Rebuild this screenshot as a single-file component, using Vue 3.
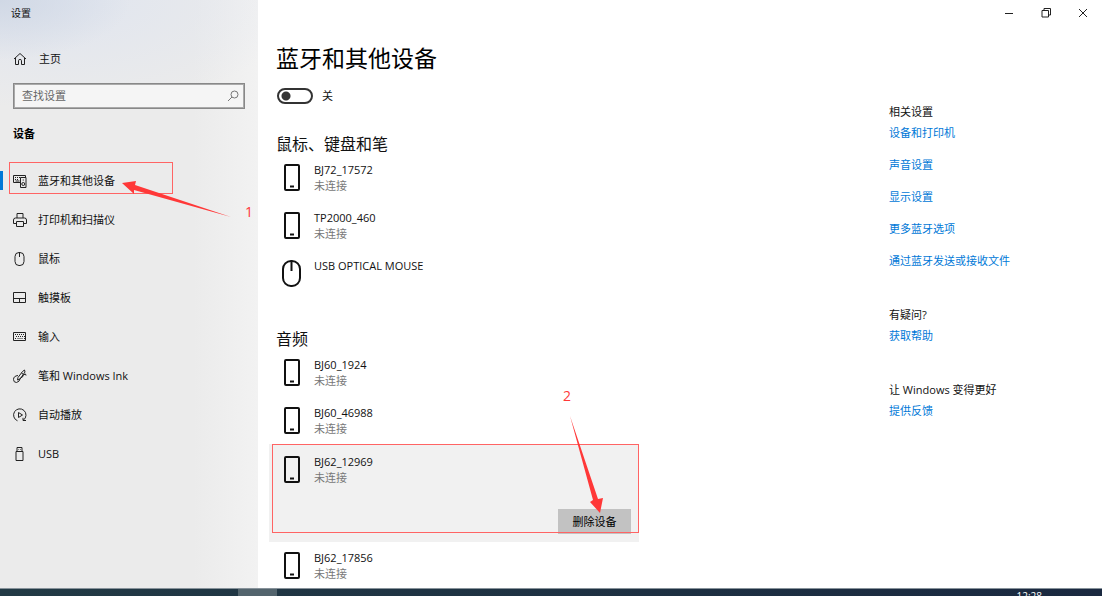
<script setup>
import { ref } from 'vue'

const query = ref('')
const bluetoothOn = ref(false)

const nav = [
  { icon: 'devices', label: '蓝牙和其他设备', active: true },
  { icon: 'printer', label: '打印机和扫描仪' },
  { icon: 'mouse', label: '鼠标' },
  { icon: 'touchpad', label: '触摸板' },
  { icon: 'keyboard', label: '输入' },
  { icon: 'pen', label: '笔和 Windows Ink' },
  { icon: 'autoplay', label: '自动播放' },
  { icon: 'usb', label: 'USB' },
]

const groups = [
  {
    title: '鼠标、键盘和笔',
    devices: [
      { name: 'BJ72_17572', status: '未连接' },
      { name: 'TP2000_460', status: '未连接' },
      { name: 'USB OPTICAL MOUSE', mouse: true },
    ],
  },
  {
    title: '音频',
    devices: [
      { name: 'BJ60_1924', status: '未连接' },
      { name: 'BJ60_46988', status: '未连接' },
      { name: 'BJ62_12969', status: '未连接', selected: true },
      { name: 'BJ62_17856', status: '未连接' },
    ],
  },
]

const related = [
  { title: '相关设置', links: ['设备和打印机', '声音设置', '显示设置', '更多蓝牙选项', '通过蓝牙发送或接收文件'] },
  { title: '有疑问?', links: ['获取帮助'] },
  { title: '让 Windows 变得更好', links: ['提供反馈'] },
]
</script>

<template>
  <div class="screen">
    <div class="window">
      <aside class="sidebar">
        <div class="app-title">设置</div>
        <a class="home" href="#">
          <svg class="icon" viewBox="0 0 14 14"><path d="M1 7 7 1.500l6 5.500M2.500 6v6.500h3V8.500q0-1 1.500-1t1.500 1v4h3V6" /></svg>
          <span>主页</span>
        </a>
        <div class="search">
          <input v-model="query" type="text" placeholder="查找设置" aria-label="查找设置" />
          <svg class="search-icon" viewBox="0 0 12 12"><circle cx="7.500" cy="4.500" r="3.500" /><path d="M5 7 1 11" /></svg>
        </div>
        <h2 class="category">设备</h2>
        <nav class="nav">
          <a v-for="item in nav" :key="item.icon" class="nav-item" :class="{ active: item.active }" href="#">
            <svg class="icon" viewBox="0 0 14 14">
              <g v-if="item.icon === 'devices'">
                <path d="M7 8.500H.5v-7h12V3M2 3.500h1m1 0h1m1 0h1m1 0h1M2 5.500h1m1 0h1M2.500 7h4M7.500 3.500h5.500v10H7.500z" />
                <circle cx="10.250" cy="10" r="1.500" /><path d="M9.700 6h1.100" />
              </g>
              <g v-else-if="item.icon === 'printer'">
                <path d="M4 5V.5h6V5M3.500 10.500h-3V7q0-2 2-2h9q2 0 2 2v3.500h-3M3.500 8.500h7v5h-7z" />
              </g>
              <g v-else-if="item.icon === 'mouse'">
                <rect x="2" y=".5" width="9" height="13" rx="4" /><path d="M6.500 .5V5" />
              </g>
              <g v-else-if="item.icon === 'touchpad'">
                <path d="M.5 1.500h12v10H.5zM.5 7.500h12M6.500 7.500v4" />
              </g>
              <g v-else-if="item.icon === 'keyboard'">
                <path d="M.5 2.500h12v8H.5z" />
                <path class="keys" d="M2 4.500h10M3 6.500h9M2 8.500h1m1.500 0h5M11 8.500h1" />
              </g>
              <g v-else-if="item.icon === 'pen'">
                <path d="m5 8.500 4.500-6 2-1.500.5 2L7 10l-2.500 1zM8.500 4l2 1.500M5 6.500Q.5 7 .5 10.500q0 3 3 3Q6.500 13 7.500 9l2-1q0-2.500 3-3l.5 1.500" />
              </g>
              <g v-else-if="item.icon === 'autoplay'">
                <path d="M4.500 12.800A6.200 6.200 0 1 1 10.500 12M5.500 4.500v5l4-2.500zM13 12.500h-3V9.800" />
              </g>
              <g v-else>
                <path d="M4 4.500v-4h5v4M3 4.500h7v9H3zM5.500 2.500h.6m1 0h.6" />
              </g>
            </svg>
            <span>{{ item.label }}</span>
          </a>
        </nav>
      </aside>

      <main class="content">
        <h1>蓝牙和其他设备</h1>
        <label class="toggle">
          <input v-model="bluetoothOn" type="checkbox" role="switch" />
          <span>{{ bluetoothOn ? '开' : '关' }}</span>
        </label>
        <section v-for="group in groups" :key="group.title" class="group">
          <h2>{{ group.title }}</h2>
          <ul>
            <li v-for="device in group.devices" :key="device.name" :class="{ selected: device.selected }">
              <div class="device">
                <svg class="device-icon" viewBox="0 0 20 28">
                  <g v-if="device.mouse"><rect x="2" y="1" width="17" height="25" rx="8" /><path d="M10.500 1v10" /></g>
                  <g v-else><rect x="4" y="1" width="14" height="25" rx="1" /><path d="M9 22.500h4" /></g>
                </svg>
                <div class="device-text">
                  <span>{{ device.name }}</span>
                  <span v-if="device.status" class="status">{{ device.status }}</span>
                </div>
              </div>
              <template v-if="device.selected">
                <button class="remove" type="button">删除设备</button>
                <div class="mark mark-device"></div>
                <svg class="arrow arrow-device" viewBox="0 0 34 98"><path d="M0 0 28 83l5-1-3 15-10-11 3-2z" /></svg>
                <span class="number number-device">2</span>
              </template>
            </li>
          </ul>
        </section>
      </main>

      <aside class="side">
        <div class="controls">
          <button type="button" aria-label="最小化"><svg viewBox="0 0 10 10"><path d="M1 5.500h8" /></svg></button>
          <button type="button" aria-label="还原"><svg viewBox="0 0 10 10"><path d="M1 2.500h6.500V9H1zM3 2.500v-2h6.500V7h-2" /></svg></button>
          <button type="button" aria-label="关闭"><svg viewBox="0 0 10 10"><path d="m1 1 8 8M9 1 1 9" /></svg></button>
        </div>
        <section v-for="block in related" :key="block.title" class="related">
          <h3>{{ block.title }}</h3>
          <a v-for="link in block.links" :key="link" href="#">{{ link }}</a>
        </section>
      </aside>

      <div class="mark mark-nav"></div>
      <svg class="arrow arrow-nav" viewBox="0 0 110 38"><path d="M0 3 14 1l-1 4 96 32L12 10v4z" /></svg>
      <span class="number number-nav">1</span>
    </div>
    <footer class="taskbar">
      <div class="task"></div>
      <time>12:28</time>
    </footer>
  </div>
</template>

<style>
body {
  margin: 0;
  background: #fff;
}
</style>

<style scoped>
* {
  box-sizing: border-box;
}
.screen {
  display: flex;
  flex-direction: column;
  height: 100vh;
  overflow: hidden;
  font: 11px/16px "Open Sans", "Noto Sans CJK SC", sans-serif;
  color: #111;
}
h1, h2, h3, ul {
  margin: 0;
  padding: 0;
  font-weight: 400;
}
a {
  text-decoration: none;
  color: inherit;
}
svg {
  fill: none;
  stroke: #222;
}
.window {
  position: relative;
  flex: 1;
  min-height: 0;
  overflow: hidden;
  display: grid;
  grid-template-columns: 258px minmax(0, 1fr) 213px;
  background: #fff;
}
.sidebar {
  padding-top: 5px;
  background:
    radial-gradient(ellipse 130px 60px at 0 0, #d0d8e5, rgba(208, 216, 229, 0)),
    radial-gradient(ellipse 240px 110px at 60px 0, #e0e5ef, rgba(230, 233, 240, 0)),
    linear-gradient(90deg, #ebebeb 75%, #f2f2f2);
}
.app-title {
  padding-left: 11px;
  font-size: 10px;
}
.home, .nav-item {
  display: flex;
  align-items: center;
  padding-left: 13px;
}
.home {
  gap: 12px;
  margin-top: 30px;
}
.icon {
  width: 14px;
  height: 14px;
}
.keys {
  stroke-dasharray: 1 1;
}
.search {
  display: flex;
  align-items: center;
  height: 26px;
  margin: 16px 13px 0 13px;
  padding: 0 5px 0 8px;
  border: 1px solid #888;
  outline: 1px solid #aaa;
  outline-offset: -2px;
  background: #f5f5f5;
}
.search input {
  flex: 1;
  min-width: 0;
  padding: 0;
  border: 0;
  outline: 0;
  background: none;
  font: inherit;
}
.search input::placeholder {
  color: #666;
  opacity: 1;
}
.search-icon {
  width: 12px;
  height: 12px;
  stroke: #777;
}
.category {
  margin: 17px 0 19px 13px;
  font-size: 11px;
  font-weight: 700;
  color: #000;
}
.nav-item {
  gap: 11px;
  height: 39px;
}
.nav-item.active {
  background: linear-gradient(#0078d7, #0078d7) 0 50% / 3px 19px no-repeat;
}
.content {
  padding: 42px 0 0 18px;
}
h1 {
  font-size: 23px;
  line-height: 32px;
  color: #000;
}
.toggle {
  display: flex;
  align-items: center;
  gap: 9px;
  margin: 14px 0 0 1px;
}
.toggle input {
  appearance: none;
  width: 36px;
  height: 16px;
  margin: 0;
  border: 2px solid #333;
  border-radius: 8px;
  background: radial-gradient(circle at 7px 50%, #333 4px, transparent 5px);
}
.group {
  max-width: 363px;
  margin-top: 29px;
}
.group h2 {
  font-size: 16px;
  line-height: 22px;
}
.group ul {
  margin-left: -7px;
  list-style: none;
}
.group li {
  position: relative;
  height: 48px;
  padding: 7px 8px 0 12px;
}
.group li.selected {
  height: 98px;
  margin: -2px 0 1px;
  padding-top: 10px;
  background: #f1f1f1;
}
.device {
  display: flex;
  gap: 13px;
}
.device-icon {
  width: 20px;
  height: 28px;
  margin-top: 2px;
  stroke: #111;
  stroke-width: 2px;
}
.device-text {
  display: flex;
  flex-direction: column;
}
.status {
  color: #777;
}
.remove {
  display: block;
  width: 73px;
  height: 25px;
  margin: 23px 0 0 auto;
  padding: 0;
  border: 0;
  background: #c2c2c2;
  font: inherit;
  color: #000;
}
.controls {
  display: flex;
  justify-content: flex-end;
  margin-bottom: 78px;
  padding-right: 1px;
}
.controls button {
  display: grid;
  place-items: center;
  width: 37px;
  height: 26px;
  padding: 0;
  border: 0;
  background: none;
}
.controls svg {
  width: 10px;
  height: 10px;
}
.related {
  display: flex;
  flex-direction: column;
  align-items: flex-start;
  gap: 16px;
  margin-bottom: 38px;
}
.related h3 {
  font-size: 11px;
  margin-bottom: -11px;
}
.related a {
  color: #0078d7;
}
.mark {
  position: absolute;
  border: 1px solid #ff6464;
  pointer-events: none;
}
.mark-nav {
  left: 9px;
  top: 162px;
  width: 164px;
  height: 32px;
}
.mark-device {
  inset: 0 0 9px 3px;
}
.arrow {
  position: absolute;
  overflow: visible;
  fill: #ff3838;
  stroke: none;
  pointer-events: none;
}
.arrow-nav {
  left: 122px;
  top: 180px;
  width: 110px;
  height: 38px;
}
.arrow-device {
  left: 301px;
  top: -28px;
  width: 34px;
  height: 98px;
}
.number {
  position: absolute;
  color: #ff3838;
  font-size: 14px;
}
.number-nav {
  left: 245px;
  top: 204px;
}
.number-device {
  left: 294px;
  top: -56px;
}
.taskbar {
  display: flex;
  justify-content: space-between;
  height: 8px;
  padding: 0 60px 0 238px;
  overflow: hidden;
  border-top: 1px solid #87929a;
  background: linear-gradient(90deg, #223a45, #1a2940);
}
.task {
  width: 39px;
  background: #53646d;
}
time {
  font-size: 10px;
  line-height: 14px;
  color: #fff;
}
</style>
